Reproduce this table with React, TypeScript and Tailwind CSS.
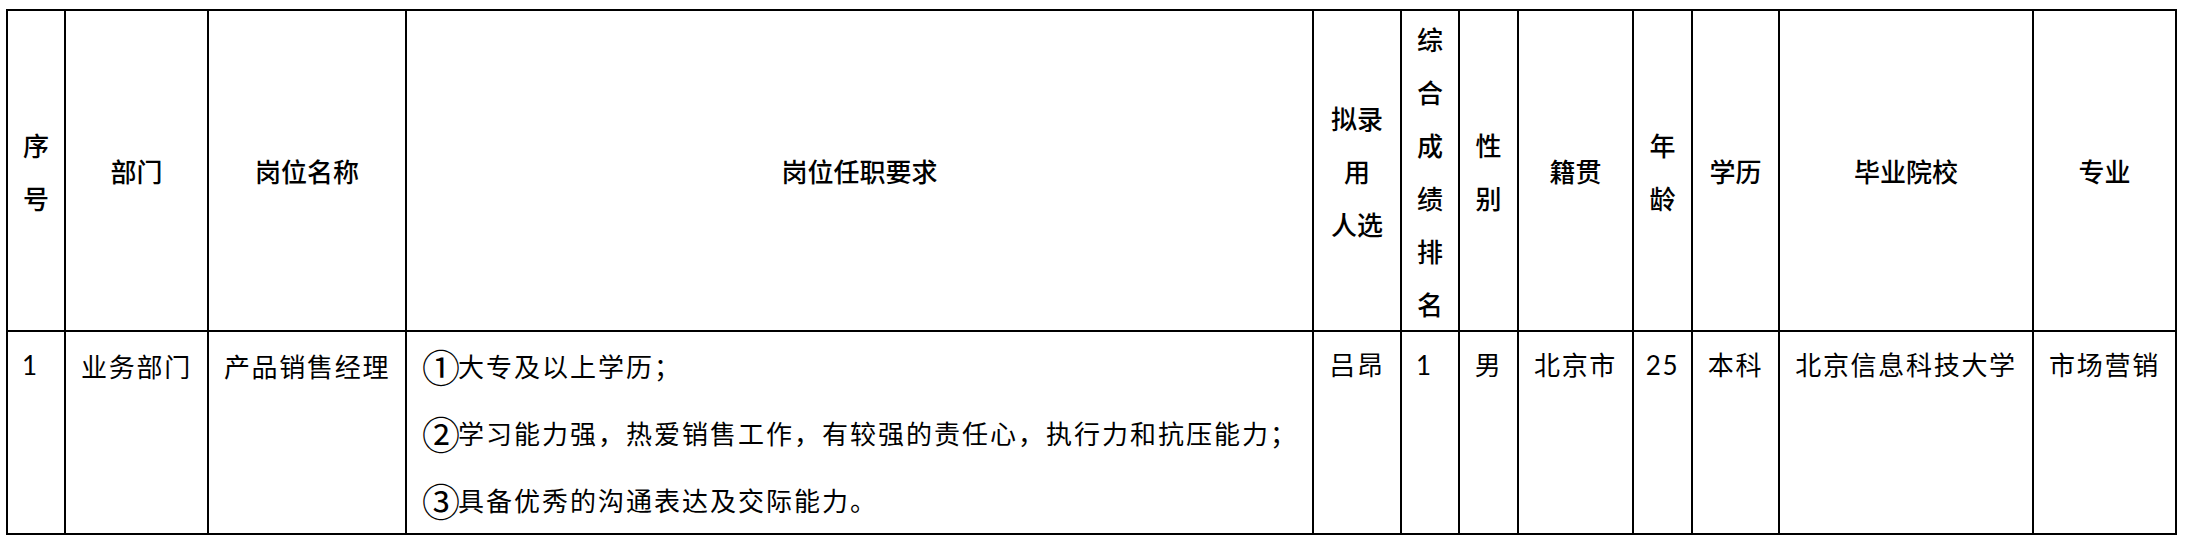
const headers: { lines: string[] }[] = [
  { lines: ['序', '号'] },
  { lines: ['部门'] },
  { lines: ['岗位名称'] },
  { lines: ['岗位任职要求'] },
  { lines: ['拟录', '用', '人选'] },
  { lines: ['综', '合', '成', '绩', '排', '名'] },
  { lines: ['性', '别'] },
  { lines: ['籍贯'] },
  { lines: ['年', '龄'] },
  { lines: ['学历'] },
  { lines: ['毕业院校'] },
  { lines: ['专业'] },
];

const requirements = [
  { no: '①', text: '大专及以上学历；' },
  { no: '②', text: '学习能力强，热爱销售工作，有较强的责任心，执行力和抗压能力；' },
  { no: '③', text: '具备优秀的沟通表达及交际能力。' },
];

const rest = ['吕昂', '1', '男', '北京市', '25', '本科', '北京信息科技大学', '市场营销'];

export default function App() {
  return (
    <div className="min-h-screen bg-white pl-[6px] pt-[9px] text-black">
      <div className="grid w-[2171px] grid-cols-[56px_141px_196px_905px_86px_56px_57px_113px_57px_85px_252px_141px] grid-rows-[319px_201px] gap-[2px] bg-black p-[2px]">
        {headers.map((h, i) => (
          <div
            key={i}
            className="flex items-center justify-center bg-white text-center font-['Noto_Sans_CJK_SC',sans-serif] text-[26px] font-medium leading-[53px]"
          >
            <div>
              {h.lines.map((line, j) => (
                <div key={j}>{line}</div>
              ))}
            </div>
          </div>
        ))}

        <div className="bg-white pl-[14px] font-['Lato','Noto_Sans_CJK_SC',sans-serif] text-[26px] leading-[67px]">1</div>
        <div className="bg-white text-center font-['Noto_Sans_CJK_SC',sans-serif] text-[26px] leading-[67px] tracking-[1.7px]">业务部门</div>
        <div className="bg-white text-center font-['Noto_Sans_CJK_SC',sans-serif] text-[26px] leading-[67px] tracking-[1.7px]">产品销售经理</div>
        <div className="bg-white pl-[15px] font-['Noto_Sans_CJK_SC',sans-serif] text-[26px] leading-[67px] tracking-[2px]">
          {requirements.map((r) => (
            <div key={r.no} className="flex items-center">
              <span className="inline-block w-[36px] font-['Noto_Sans_CJK_SC',sans-serif] text-[38px] leading-none tracking-normal">{r.no}</span>
              <span>{r.text}</span>
            </div>
          ))}
        </div>
        {rest.map((v, i) => (
          <div
            key={i}
            className={
              v === '1'
                ? "bg-white pl-[14px] font-['Lato','Noto_Sans_CJK_SC',sans-serif] text-[26px] leading-[67px]"
                : "bg-white text-center font-['Lato','Noto_Sans_CJK_SC',sans-serif] text-[26px] leading-[67px] tracking-[1.7px]"
            }
          >
            {v}
          </div>
        ))}
      </div>
    </div>
  );
}
